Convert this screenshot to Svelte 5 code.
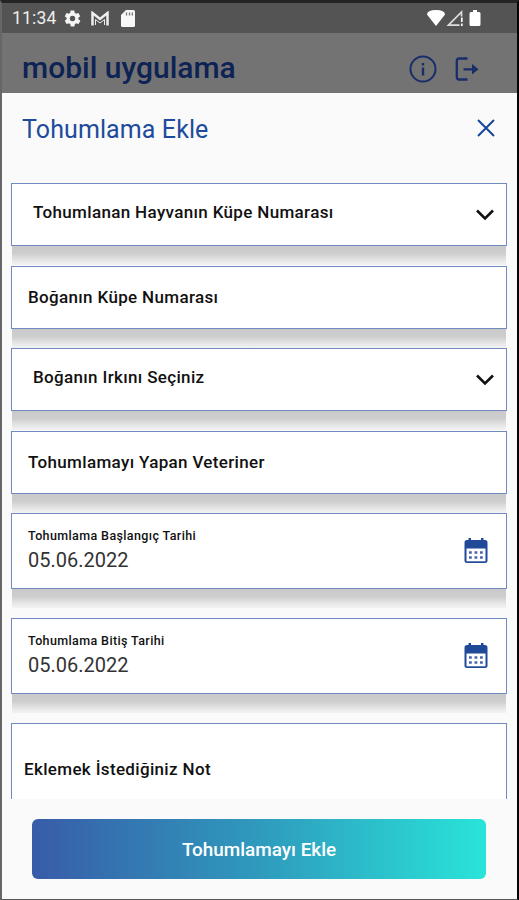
<script lang="ts">
  type Field = { kind: 'select' | 'text' | 'date' | 'note'; label: string; value?: string };

  const fields: Field[] = [
    { kind: 'select', label: 'Tohumlanan Hayvanın Küpe Numarası' },
    { kind: 'text', label: 'Boğanın Küpe Numarası' },
    { kind: 'select', label: 'Boğanın Irkını Seçiniz' },
    { kind: 'text', label: 'Tohumlamayı Yapan Veteriner' },
    { kind: 'date', label: 'Tohumlama Başlangıç Tarihi', value: '05.06.2022' },
    { kind: 'date', label: 'Tohumlama Bitiş Tarihi', value: '05.06.2022' },
    { kind: 'note', label: 'Eklemek İstediğiniz Not' }
  ];
</script>

<div class="phone">
  <div class="status">
    <span class="status__time">11:34</span>
    <svg class="status__gear" viewBox="0 0 24 24" width="19" height="19" fill="#f4f4f4">
      <path d="M19.4 13a7.5 7.5 0 0 0 0-2l2.1-1.6c.2-.2.2-.4.1-.6l-2-3.5c-.1-.2-.4-.3-.6-.2l-2.5 1a7.3 7.3 0 0 0-1.7-1l-.4-2.6c0-.3-.2-.5-.5-.5h-4c-.2 0-.4.2-.5.5L9.1 5.1c-.6.2-1.2.6-1.7 1l-2.4-1c-.3-.1-.5 0-.6.2l-2 3.5c-.1.2-.1.4.1.6L4.6 11a7.5 7.5 0 0 0 0 2l-2.1 1.6c-.2.2-.2.4-.1.6l2 3.5c.1.2.4.3.6.2l2.5-1c.5.4 1.1.7 1.7 1l.4 2.6c0 .3.2.5.5.5h4c.2 0 .4-.2.5-.5l.4-2.6c.6-.2 1.200-.6 1.700-1l2.500 1c.2.1.5 0 .6-.2l2-3.500c.1-.2.1-.4-.1-.6zM12 15.400a3.400 3.400 0 1 1 0-6.800 3.400 3.400 0 0 1 0 6.800z" />
    </svg>
    <svg class="status__mail" viewBox="0 0 18 15" width="18" height="15" fill="none" stroke="#eee">
      <path d="M1.500 14.500V2L9 8l7.500-6v12.500" stroke-width="2.500" />
      <path d="M4.500 14V8.500L9 12l4.500-3.500V14" stroke-width="1" />
    </svg>
    <svg viewBox="0 0 14 17" width="14" height="17">
      <path d="M5 0h7.500Q14 0 14 1.500v14q0 1.500-1.500 1.500h-11Q0 17 0 15.500V5z" fill="#f7f7f7" />
      <path d="M5.500 2.500v3M8.500 2.500v3M11.300 2.500v3" stroke="#777" stroke-width="1.300" />
    </svg>
    <svg class="status__right" viewBox="0 0 56 18" width="56" height="18">
      <path d="M9 17 0 5.500Q0 1 9 1t9 4.500z" fill="#fff" />
      <path d="M21.500 16.200 34.500 3v13.200z" fill="none" stroke="#ddd" stroke-width="1.700" />
      <path d="M34.500 7.500v9.500" stroke="#545454" stroke-width="4" />
      <path d="M34.800 8.500v4.500M34.800 14.500v2.500" stroke="#fff" stroke-width="1.700" />
      <path d="M46 1h4v2h2q1.500 0 1.500 1.500v11q0 1.500-1.500 1.500h-8q-1.500 0-1.500-1.500v-11Q42.500 3 44 3h2z" fill="#fff" />
    </svg>
  </div>

  <header class="appbar">
    <h1 class="appbar__title">mobil uygulama</h1>
    <svg viewBox="0 0 28 28" width="28" height="28" fill="none" stroke="#1a2d68">
      <circle cx="14" cy="14" r="12.500" stroke-width="2" />
      <path d="M14 8v2.500M14 12.500v8" stroke-width="2.400" />
    </svg>
    <svg class="appbar__exit" viewBox="0 0 24 24" width="24" height="24" fill="none" stroke="#1a2d68" stroke-width="2.300">
      <path d="M12.500 1.500H4.200Q1.800 1.500 1.800 4v16q0 2.500 2.400 2.500h8.300M8.500 12.300h11" />
      <path d="m17 7 6.500 5.300L17 17.600z" fill="#1a2d68" stroke="none" />
    </svg>
  </header>

  <main class="sheet">
    <div class="sheet__head">
      <h2 class="sheet__title">Tohumlama Ekle</h2>
      <svg viewBox="0 0 18 18" width="18" height="18" stroke="#164698" stroke-width="2">
        <path d="m1 1 16 16M17 1 1 17" />
      </svg>
    </div>

    <div class="form">
      {#each fields as field}
        <div class="field field--{field.kind}">
          <div class="field__text">
            <span class="field__label">{field.label}</span>
            {#if field.value}
              <span class="field__value">{field.value}</span>
            {/if}
          </div>
          {#if field.kind === 'select'}
            <svg class="field__icon" viewBox="0 0 18 12" width="18" height="12" fill="none" stroke="#111" stroke-width="2.600">
              <path d="m1 1.500 8 8 8-8" />
            </svg>
          {:else if field.kind === 'date'}
            <svg class="field__icon" viewBox="0 0 24 26" width="24" height="26">
              <path d="M4.500 0H7v2h10V0h2.500v2H21q2.500 0 2.500 2.500v18Q23.500 25 21 25H3Q.5 25 .5 22.500v-18Q.5 2 3 2h1.500z" fill="#204a98" />
              <path d="M2.500 10.500h19v12.800h-19z" fill="#fff" />
              <path d="M5 14.500h14M5 19.500h14" stroke="#4a66ae" stroke-width="2.500" stroke-dasharray="2.800 2.700" />
            </svg>
          {/if}
        </div>
      {/each}
    </div>

    <footer class="actions">
      <button class="submit">Tohumlamayı Ekle</button>
    </footer>
  </main>
</div>

<style>
  :global(body) {
    background: #000;
  }
  .phone {
    box-sizing: border-box;
    width: 519px;
    height: 900px;
    display: flex;
    flex-direction: column;
    overflow: hidden;
    border: solid;
    border-width: 3px 2px 1px;
    border-color: #242424 #050505 #555 #666;
    background: #fafafa;
    font-family: Roboto, sans-serif;
  }
  .status {
    flex: none;
    display: flex;
    align-items: center;
    height: 30px;
    padding: 0 34px 0 10px;
    background: #545454;
    color: #eee;
  }
  .status__time {
    width: 51px;
    font-size: 17.500px;
    letter-spacing: 0.2px;
    white-space: nowrap;
  }
  .status__gear { margin-right: 9px; }
  .status__mail { margin-right: 12px; }
  .status__right { margin-left: auto; }
  .appbar {
    flex: none;
    display: flex;
    align-items: center;
    height: 60px;
    padding: 12px 38px 0 20px;
    box-sizing: border-box;
    background: #737373;
  }
  .appbar__title {
    flex: 1;
    margin: -3px 0 0;
    font-size: 30px;
    font-weight: 500;
    color: #0d2255;
  }
  .appbar__exit { margin: -1px 0 0 18px; }
  .sheet {
    flex: 1;
    min-height: 0;
    display: flex;
    flex-direction: column;
  }
  .sheet__head {
    flex: none;
    display: flex;
    align-items: center;
    justify-content: space-between;
    height: 70px;
    margin-bottom: 20px;
    padding: 0 22px 0 20px;
  }
  .sheet__title {
    margin: 2px 0 0;
    font-size: 25px;
    font-weight: 400;
    letter-spacing: 0.1px;
    color: #204a9c;
  }
  .form {
    flex: none;
    height: 616px;
    padding: 0 10px 0 9px;
    overflow: hidden;
  }
  .field {
    position: relative;
    box-sizing: border-box;
    display: flex;
    align-items: center;
    justify-content: space-between;
    height: 63px;
    margin-bottom: 19.600px;
    padding: 0 12px 0 16px;
    border: 1px solid #7489c2;
    background: #fff;
  }
  /* hard-edged drop shadow, falls only below the box */
  .field::after {
    content: '';
    position: absolute;
    top: calc(100% + 1px);
    left: 0;
    right: 0;
    height: 19px;
    background: linear-gradient(#c9c9c9, #cecece 40%, #e6e6e6 75%, #f3f3f3);
  }
  .field__label {
    font-size: 17px;
    font-weight: 500;
    letter-spacing: 0.340px;
    color: #111;
    white-space: nowrap;
  }
  .field--select { padding-left: 21px; }
  .field--select .field__text { margin-top: -5px; }
  .field--date {
    height: 76px;
    margin-bottom: 28.800px;
    padding-right: 18px;
  }
  .field--date .field__text {
    display: flex;
    flex-direction: column;
    margin-top: -3px;
  }
  .field--date .field__label {
    font-size: 12.500px;
    line-height: 20px;
    letter-spacing: 0.380px;
  }
  .field__value {
    font-size: 20px;
    line-height: 28px;
    color: #333;
  }
  .field--note {
    height: 120px;
    margin-bottom: 0;
    padding: 0 0 28px 12px;
  }
  .actions {
    flex: none;
    display: flex;
    padding: 20px 31px 0 30px;
  }
  .submit {
    flex: 1;
    height: 60px;
    padding: 0;
    border: 0;
    border-radius: 6px;
    background: linear-gradient(90deg, #385ca8, #2f9abd 50%, #29e4d9);
    color: #fff;
    font-family: inherit;
    font-size: 18.900px;
    font-weight: 500;
  }
</style>
